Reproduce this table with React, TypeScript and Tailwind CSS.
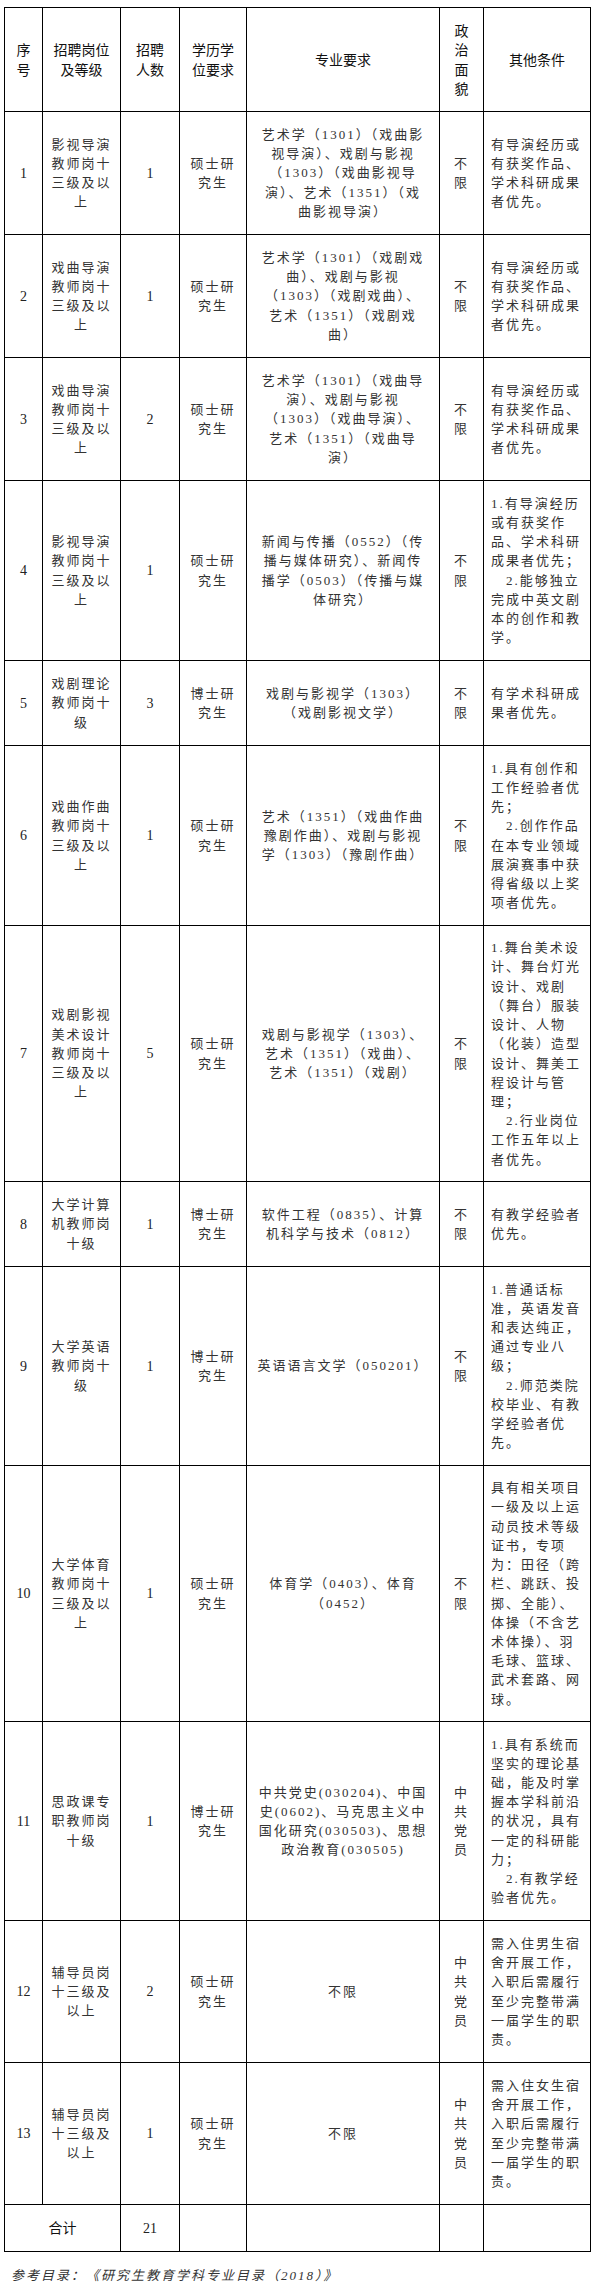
import React from 'react';

type Row = {
  no: string;
  post: string[];
  count: string;
  edu: string[];
  major: string[];
  politics: string[];
  other: string[];
  h: string;
};

const MASTER = ['硕士研', '究生'];
const DOCTOR = ['博士研', '究生'];
const ANY = ['不', '限'];
const PARTY = ['中', '共', '党', '员'];

const rows: Row[] = [
  {
    no: '1',
    post: ['影视导演', '教师岗十', '三级及以', '上'],
    count: '1',
    edu: MASTER,
    major: ['艺术学（1301）（戏曲影', '视导演）、戏剧与影视', '（1303）（戏曲影视导', '演）、艺术（1351）（戏', '曲影视导演）'],
    politics: ANY,
    other: ['有导演经历或', '有获奖作品、', '学术科研成果', '者优先。'],
    h: 'h-[123px]',
  },
  {
    no: '2',
    post: ['戏曲导演', '教师岗十', '三级及以', '上'],
    count: '1',
    edu: MASTER,
    major: ['艺术学（1301）（戏剧戏', '曲）、戏剧与影视', '（1303）（戏剧戏曲）、', '艺术（1351）（戏剧戏', '曲）'],
    politics: ANY,
    other: ['有导演经历或', '有获奖作品、', '学术科研成果', '者优先。'],
    h: 'h-[123px]',
  },
  {
    no: '3',
    post: ['戏曲导演', '教师岗十', '三级及以', '上'],
    count: '2',
    edu: MASTER,
    major: ['艺术学（1301）（戏曲导', '演）、戏剧与影视', '（1303）（戏曲导演）、', '艺术（1351）（戏曲导', '演）'],
    politics: ANY,
    other: ['有导演经历或', '有获奖作品、', '学术科研成果', '者优先。'],
    h: 'h-[123px]',
  },
  {
    no: '4',
    post: ['影视导演', '教师岗十', '三级及以', '上'],
    count: '1',
    edu: MASTER,
    major: ['新闻与传播（0552）（传', '播与媒体研究）、新闻传', '播学（0503）（传播与媒', '体研究）'],
    politics: ANY,
    other: ['1.有导演经历', '或有获奖作', '品、学术科研', '成果者优先；', '\u30002.能够独立', '完成中英文剧', '本的创作和教', '学。'],
    h: 'h-[180px]',
  },
  {
    no: '5',
    post: ['戏剧理论', '教师岗十', '级'],
    count: '3',
    edu: DOCTOR,
    major: ['戏剧与影视学（1303）', '（戏剧影视文学）'],
    politics: ANY,
    other: ['有学术科研成', '果者优先。'],
    h: 'h-[85px]',
  },
  {
    no: '6',
    post: ['戏曲作曲', '教师岗十', '三级及以', '上'],
    count: '1',
    edu: MASTER,
    major: ['艺术（1351）（戏曲作曲', '豫剧作曲）、戏剧与影视', '学（1303）（豫剧作曲）'],
    politics: ANY,
    other: ['1.具有创作和', '工作经验者优', '先；', '\u30002.创作作品', '在本专业领域', '展演赛事中获', '得省级以上奖', '项者优先。'],
    h: 'h-[180px]',
  },
  {
    no: '7',
    post: ['戏剧影视', '美术设计', '教师岗十', '三级及以', '上'],
    count: '5',
    edu: MASTER,
    major: ['戏剧与影视学（1303）、', '艺术（1351）（戏曲）、', '艺术（1351）（戏剧）'],
    politics: ANY,
    other: ['1.舞台美术设', '计、舞台灯光', '设计、戏剧', '（舞台）服装', '设计、人物', '（化装）造型', '设计、舞美工', '程设计与管', '理；', '\u30002.行业岗位', '工作五年以上', '者优先。'],
    h: 'h-[256px]',
  },
  {
    no: '8',
    post: ['大学计算', '机教师岗', '十级'],
    count: '1',
    edu: DOCTOR,
    major: ['软件工程（0835）、计算', '机科学与技术（0812）'],
    politics: ANY,
    other: ['有教学经验者', '优先。'],
    h: 'h-[85px]',
  },
  {
    no: '9',
    post: ['大学英语', '教师岗十', '级'],
    count: '1',
    edu: DOCTOR,
    major: ['英语语言文学（050201）'],
    politics: ANY,
    other: ['1.普通话标', '准，英语发音', '和表达纯正，', '通过专业八', '级；', '\u30002.师范类院', '校毕业、有教', '学经验者优', '先。'],
    h: 'h-[199px]',
  },
  {
    no: '10',
    post: ['大学体育', '教师岗十', '三级及以', '上'],
    count: '1',
    edu: MASTER,
    major: ['体育学（0403）、体育', '（0452）'],
    politics: ANY,
    other: ['具有相关项目', '一级及以上运', '动员技术等级', '证书，专项', '为：田径（跨', '栏、跳跃、投', '掷、全能）、', '体操（不含艺', '术体操）、羽', '毛球、篮球、', '武术套路、网', '球。'],
    h: 'h-[256px]',
  },
  {
    no: '11',
    post: ['思政课专', '职教师岗', '十级'],
    count: '1',
    edu: DOCTOR,
    major: ['中共党史(030204)、中国', '史(0602)、马克思主义中', '国化研究(030503)、思想', '政治教育(030505)'],
    politics: PARTY,
    other: ['1.具有系统而', '坚实的理论基', '础，能及时掌', '握本学科前沿', '的状况，具有', '一定的科研能', '力；', '\u30002.有教学经', '验者优先。'],
    h: 'h-[199px]',
  },
  {
    no: '12',
    post: ['辅导员岗', '十三级及', '以上'],
    count: '2',
    edu: MASTER,
    major: ['不限'],
    politics: PARTY,
    other: ['需入住男生宿', '舍开展工作，', '入职后需履行', '至少完整带满', '一届学生的职', '责。'],
    h: 'h-[142px]',
  },
  {
    no: '13',
    post: ['辅导员岗', '十三级及', '以上'],
    count: '1',
    edu: MASTER,
    major: ['不限'],
    politics: PARTY,
    other: ['需入住女生宿', '舍开展工作，', '入职后需履行', '至少完整带满', '一届学生的职', '责。'],
    h: 'h-[142px]',
  },
];

const Lines = ({ lines }: { lines: string[] }) => (
  <>
    {lines.map((l, i) => (
      <div key={i} className="whitespace-nowrap">
        {l}
      </div>
    ))}
  </>
);

const cell = 'border border-black align-middle p-0';
const body = "font-['Liberation_Serif','Noto_Sans_CJK_SC',serif] text-[13px] tracking-[2px] leading-[19.2px] text-[#333]";
const head = "font-['Noto_Sans_CJK_SC',sans-serif] text-[14px] leading-[19.3px] text-[#111] text-center";
const num = "font-['Liberation_Serif',serif] text-[14px] text-[#222] text-center";

const App = () => {
  return (
    <div className="w-[596px] min-h-[2291px] bg-white pt-[7px]">
      <table className="table-fixed border-collapse w-[586px] ml-[4px]">
        <colgroup>
          <col className="w-[38px]" />
          <col className="w-[78px]" />
          <col className="w-[59px]" />
          <col className="w-[67px]" />
          <col className="w-[193px]" />
          <col className="w-[44px]" />
          <col className="w-[107px]" />
        </colgroup>
        <thead>
          <tr className="h-[104px]">
            <th className={`${cell} ${head} font-normal`}><Lines lines={['序', '号']} /></th>
            <th className={`${cell} ${head} font-normal`}><Lines lines={['招聘岗位', '及等级']} /></th>
            <th className={`${cell} ${head} font-normal`}><Lines lines={['招聘', '人数']} /></th>
            <th className={`${cell} ${head} font-normal`}><Lines lines={['学历学', '位要求']} /></th>
            <th className={`${cell} ${head} font-normal`}>专业要求</th>
            <th className={`${cell} ${head} font-normal`}><Lines lines={['政', '治', '面', '貌']} /></th>
            <th className={`${cell} ${head} font-normal`}>其他条件</th>
          </tr>
        </thead>
        <tbody>
          {rows.map((r) => (
            <tr key={r.no} className={r.h}>
              <td className={`${cell} ${num}`}>{r.no}</td>
              <td className={`${cell} ${body} text-center`}><Lines lines={r.post} /></td>
              <td className={`${cell} ${num}`}>{r.count}</td>
              <td className={`${cell} ${body} text-center`}><Lines lines={r.edu} /></td>
              <td className={`${cell} ${body} text-center`}><Lines lines={r.major} /></td>
              <td className={`${cell} ${body} text-center`}><Lines lines={r.politics} /></td>
              <td className={`${cell} ${body} text-left pl-[7px]`}><Lines lines={r.other} /></td>
            </tr>
          ))}
          <tr className="h-[47px]">
            <td colSpan={2} className={`${cell} ${head}`}>合计</td>
            <td className={`${cell} ${num}`}>21</td>
            <td className={cell}></td>
            <td className={cell}></td>
            <td className={cell}></td>
            <td className={cell}></td>
          </tr>
        </tbody>
      </table>
      <p className="mt-[14px] pl-[11px] italic font-['Liberation_Serif','Noto_Sans_CJK_SC',serif] text-[13px] tracking-[2px] leading-[19px] text-[#333]">
        参考目录：《研究生教育学科专业目录（2018）》
      </p>
    </div>
  );
};

export default App;
